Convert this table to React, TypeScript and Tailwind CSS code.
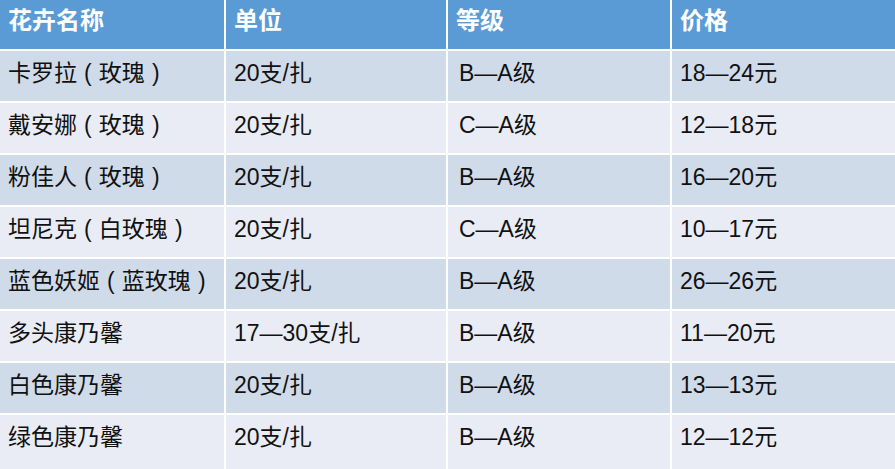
const header = ["花卉名称", "单位", "等级", "价格"];

const rows = [
  ["卡罗拉（玫瑰）", "20支/扎", "B—A级", "18—24元"],
  ["戴安娜（玫瑰）", "20支/扎", "C—A级", "12—18元"],
  ["粉佳人（玫瑰）", "20支/扎", "B—A级", "16—20元"],
  ["坦尼克（白玫瑰）", "20支/扎", "C—A级", "10—17元"],
  ["蓝色妖姬（蓝玫瑰）", "20支/扎", "B—A级", "26—26元"],
  ["多头康乃馨", "17—30支/扎", "B—A级", "11—20元"],
  ["白色康乃馨", "20支/扎", "B—A级", "13—13元"],
  ["绿色康乃馨", "20支/扎", "B—A级", "12—12元"],
];

const font = { fontFamily: '"Liberation Sans", "Noto Sans CJK SC", sans-serif' };

// brackets sit centred in a ~1em box, as in the original sheet
function Cell({ text }: { text: string }) {
  const parts = text.split(/([（）])/);
  return (
    <>
      {parts.map((p, k) =>
        p === "（" || p === "）" ? (
          <span key={k} className="inline-block w-[0.95em] text-center font-light">
            {p === "（" ? "(" : ")"}
          </span>
        ) : (
          <span key={k}>{p}</span>
        )
      )}
    </>
  );
}

export default function App() {
  return (
    <div
      className="w-[895px] h-[469px] bg-white grid grid-cols-[224px_220px_222px_223px] grid-rows-[49px_repeat(7,50px)_1fr] gap-x-[2px] gap-y-[2px] overflow-hidden"
      style={font}
    >
      {header.map((h) => (
        <div key={h} className="bg-[#5b9bd5] text-white font-bold text-[24px] leading-none pt-[9px] pl-[8px]">
          {h}
        </div>
      ))}
      {rows.map((r, i) =>
        r.map((c, j) => (
          <div
            key={`${i}-${j}`}
            className={`${i % 2 === 0 ? "bg-[#d0dbea]" : "bg-[#e9ecf5]"} text-[#111111] text-[23px] leading-none pt-[11px] whitespace-nowrap ${j === 2 ? "pl-[11px]" : "pl-[8px]"}`}
          >
            <Cell text={c} />
          </div>
        ))
      )}
    </div>
  );
}
